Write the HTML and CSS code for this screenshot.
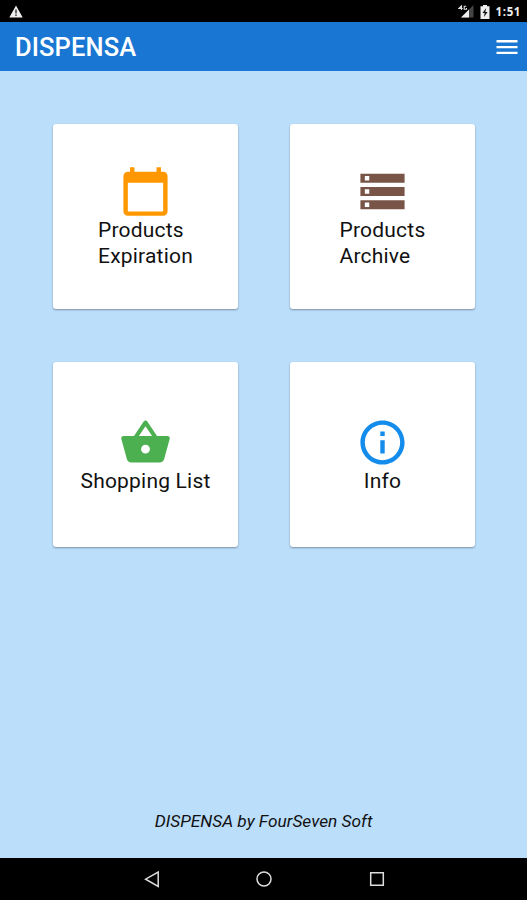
FILE: index.html
```html
<!DOCTYPE html>
<html lang="en">
<head>
  <meta charset="UTF-8" />
  <meta name="viewport" content="width=device-width, initial-scale=1.0"/>
  <title>Dispensa</title>
  <link rel="stylesheet" href="styles.css">
</head>
<body>

  <div class="status-bar">
    <svg class="warning" viewBox="0 0 14 13">
      <path fill="#eee" d="M7 .5L13.7 12.500H.3z"/>
      <path fill="#444" d="M6.200 4.500h1.600v4H6.200zM6.200 9.600h1.600v1.400H6.200z"/>
    </svg>
    <div class="status-right">
      <svg class="signal" viewBox="0 0 16 13">
        <path fill="#444" d="M15.500 0v12.500H3z"/>
        <path fill="#eee" d="M11 4.500v8H3z"/>
        <path fill="none" stroke="#ddd" stroke-width="1.100" d="M3.500 5V.8L.8 3.500h4M8.300 1.300H6.200v3h2.300V3"/>
      </svg>
      <svg class="battery" viewBox="0 0 10 14">
        <path fill="#eee" d="M3 0h4v1.300h2.500V14H.5V1.300H3z"/>
        <path fill="#111" d="M6.200 3L2.500 8h2.200l-.8 4 3.700-5H5.300z"/>
      </svg>
      <span class="clock">1:51</span>
    </div>
  </div>

  <div class="top-bar">
    <h1>DISPENSA</h1>
    <button class="menu-btn" aria-label="Menu">
      <svg viewBox="0 0 22 16"><path d="M.5 1h21v2.400H.5zM.5 6.900h21v2.400H.5zM.5 12.700h21v2.400H.5z"/></svg>
    </button>
  </div>

  <div class="content">
    <div class="cards">
      <div class="card">
        <svg class="icon orange" viewBox="0 0 24 24"><path d="M20 3h-1V1h-2v2H7V1H5v2H4c-1.100 0-2 .9-2 2v16c0 1.100.9 2 2 2h16c1.100 0 2-.9 2-2V5c0-1.100-.9-2-2-2zm0 18H4V8h16v13z"/></svg>
        <div class="card-name">Products<br>Expiration</div>
      </div>
      <div class="card">
        <svg class="icon brown" viewBox="0 0 24 24"><path d="M2 20h20v-4H2v4zm2-3h2v2H4v-2zM2 4v4h20V4H2zm4 3H4V5h2v2zm-4 7h20v-4H2v4zm2-3h2v2H4v-2z"/></svg>
        <div class="card-name">Products<br>Archive</div>
      </div>
      <div class="card">
        <svg class="icon green" viewBox="0 0 24 24"><path d="M17.210 9l-4.380-6.560c-.19-.28-.51-.42-.83-.42-.32 0-.64.14-.83.43L6.790 9H2c-.55 0-1 .45-1 1 0 .09.01.18.04.27l2.540 9.270c.23.84 1 1.460 1.920 1.460h13c.92 0 1.690-.62 1.930-1.460l2.540-9.270L23 10c0-.55-.45-1-1-1h-4.790zM9 9l3-4.400L15 9H9zm3 8c-1.100 0-2-.9-2-2s.9-2 2-2 2 .9 2 2-.9 2-2 2z"/></svg>
        <div class="card-name">Shopping List</div>
      </div>
      <div class="card">
        <svg class="icon blue" viewBox="0 0 24 24"><path d="M11 17h2v-6h-2v6zm1-15C6.480 2 2 6.480 2 12s4.480 10 10 10 10-4.480 10-10S17.520 2 12 2zm0 18c-4.410 0-8-3.590-8-8s3.590-8 8-8 8 3.590 8 8-3.590 8-8 8zM11 9h2V7h-2v2z"/></svg>
        <div class="card-name">Info</div>
      </div>
    </div>
    <div class="credits">DISPENSA by FourSeven Soft</div>
  </div>

  <div class="nav-bar">
    <svg viewBox="0 0 18 18"><path d="M15.200 2v14.400L2.600 9.200z"/></svg>
    <svg viewBox="0 0 18 18"><circle cx="9" cy="9" r="7"/></svg>
    <svg viewBox="0 0 18 18"><path d="M2.700 2.700h12.600v12.600H2.700z"/></svg>
  </div>

</body>
</html>
```

FILE: styles.css
```css
body {
  font-family: Roboto, sans-serif;
  background-color: #bbdefb;
  margin: 0;
  height: 100vh;
  display: flex;
  flex-direction: column;
  overflow: hidden;
}

svg {
  display: block;
}

.status-bar {
  display: flex;
  justify-content: space-between;
  align-items: center;
  box-sizing: border-box;
  height: 22px;
  padding: 1px 6px 0 9px;
  background: #000;
}

.warning {
  width: 14px;
  height: 13px;
}

.status-right {
  display: flex;
  align-items: center;
  gap: 6px;
}

.signal {
  width: 16px;
  height: 13px;
}

.battery {
  width: 10px;
  height: 14px;
}

.clock {
  color: #eee;
  font-family: "Open Sans", sans-serif;
  font-size: 11.500px;
  line-height: 14px;
  font-weight: bold;
  letter-spacing: 0.600px;
}

.top-bar {
  display: flex;
  justify-content: space-between;
  align-items: center;
  height: 49px;
  padding: 0 9px 0 15px;
  background-color: #1976d2;
}

.top-bar h1 {
  margin: 0;
  color: white;
  font-size: 25.500px;
  line-height: 30px;
  font-weight: 500;
  letter-spacing: 0.100px;
}

.menu-btn {
  padding: 0;
  border: none;
  background: none;
}

.menu-btn svg {
  width: 22px;
  height: 16px;
  fill: white;
}

.content {
  flex: 1;
  display: flex;
  flex-direction: column;
  justify-content: space-between;
  align-items: center;
  padding: 53px 0 26px;
}

.cards {
  display: grid;
  grid-template-columns: 185px 185px;
  grid-auto-rows: 185px;
  gap: 52.500px 52px;
  padding-left: 1px;
}

.card {
  display: flex;
  flex-direction: column;
  justify-content: center;
  align-items: center;
  box-sizing: border-box;
  padding-top: 2px;
  background: white;
  border-radius: 3px;
  box-shadow: 0 1px 2px rgba(0, 0, 0, 0.35);
}

.icon {
  width: 53px;
  height: 53px;
}

.orange {
  fill: #ff9800;
}

.brown {
  fill: #795548;
}

.green {
  fill: #4caf50;
}

.blue {
  fill: #148ceb;
}

.card-name {
  color: #111;
  font-size: 21px;
  line-height: 25.700px;
  letter-spacing: 0.200px;
}

.credits {
  color: #111;
  font-size: 17.300px;
  line-height: 22px;
  font-style: italic;
}

.nav-bar {
  display: flex;
  justify-content: center;
  align-items: center;
  gap: 94.500px;
  height: 42px;
  padding-left: 1px;
  background: #000;
}

.nav-bar svg {
  width: 18px;
  height: 18px;
  fill: none;
  stroke: #ddd;
  stroke-width: 1.500;
}
```
